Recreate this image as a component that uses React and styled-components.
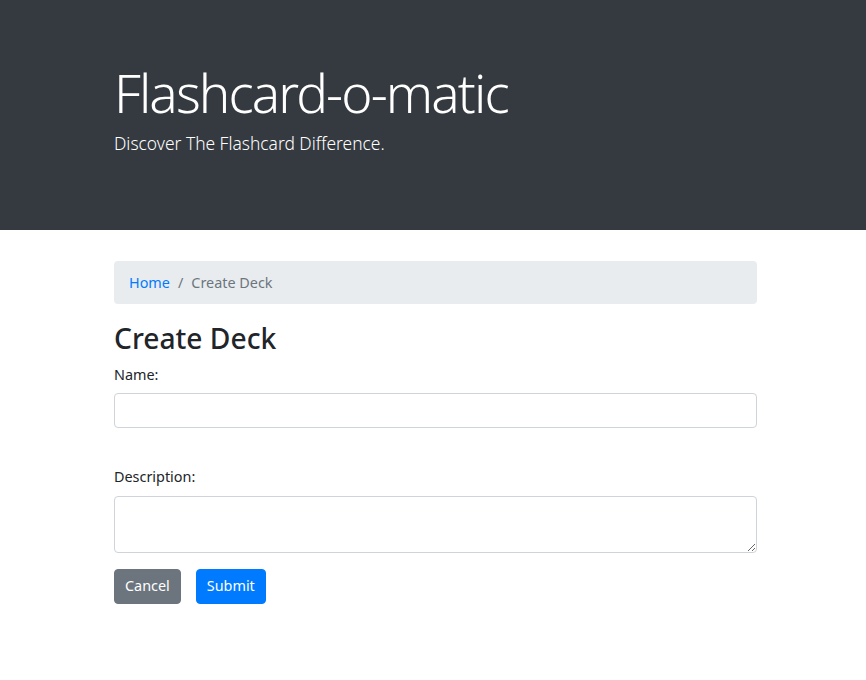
import React from 'react'
import styled, { createGlobalStyle } from 'styled-components'

const GlobalStyle = createGlobalStyle`
  body {
    margin: 0;
    background: #fff;
    font-family: 'Noto Sans', 'Open Sans', sans-serif;
    font-size: 14.4px;
    line-height: 1.5;
    color: #212529;
  }
  * {
    box-sizing: border-box;
  }
`

const Header = styled.header`
  background: #343a40;
  color: #fff;
  height: 230px;
  padding-top: 61px;
`
const Container = styled.div`
  width: 643px;
  margin-left: 114px;
`
const Title = styled.h1`
  margin: 0 0 5px;
  font-size: 53px;
  font-weight: 300;
  line-height: 1.2;
  letter-spacing: -1.9px;
`
const Lead = styled.p`
  margin: 0;
  font-size: 17.4px;
  font-weight: 300;
  line-height: 1.5;
`
const Main = styled.main`
  padding-top: 31px;
`
const Breadcrumb = styled.nav`
  display: flex;
  align-items: center;
  height: 43px;
  padding: 0 15px;
  background: #e9ecef;
  border-radius: 4px;
  margin-bottom: 18px;
  color: #6c757d;
`
const Crumb = styled.a`
  color: #007bff;
  text-decoration: none;
`
const Divider = styled.span`
  padding: 0 8px;
  color: #6c757d;
`
const Heading = styled.h2`
  margin: 0 0 8px;
  font-size: 28.2px;
  font-weight: 500;
  line-height: 1.2;
`
const Group = styled.div`
  margin-bottom: ${(props) => props.gap || 14}px;
`
const Label = styled.label`
  display: block;
  margin-bottom: 8px;
`
const Input = styled.input`
  display: block;
  width: 100%;
  height: 34.5px;
  padding: 5px 11px;
  font: inherit;
  border: 1px solid #ced4da;
  border-radius: 4px;
`
const TextArea = styled.textarea`
  display: block;
  width: 100%;
  height: 57px;
  padding: 5px 11px;
  font: inherit;
  border: 1px solid #ced4da;
  border-radius: 4px;
`
const Actions = styled.div`
  display: flex;
  gap: 15px;
`
const Button = styled.button`
  height: 35px;
  padding: 0 10px;
  font: inherit;
  color: #fff;
  background: ${(props) => (props.primary ? '#007bff' : '#6c757d')};
  border: 1px solid ${(props) => (props.primary ? '#007bff' : '#6c757d')};
  border-radius: 4px;
`

export default function App() {
  return (
    <>
      <GlobalStyle />
      <Header>
        <Container>
          <Title>Flashcard-o-matic</Title>
          <Lead>Discover The Flashcard Difference.</Lead>
        </Container>
      </Header>
      <Main>
        <Container>
          <Breadcrumb>
            <Crumb href="#">Home</Crumb>
            <Divider>/</Divider>
            <span>Create Deck</span>
          </Breadcrumb>
          <Heading>Create Deck</Heading>
          <form>
            <Group gap={38}>
              <Label htmlFor="name">Name:</Label>
              <Input id="name" type="text" />
            </Group>
            <Group gap={16}>
              <Label htmlFor="description">Description:</Label>
              <TextArea id="description" rows={2} />
            </Group>
            <Actions>
              <Button type="button">Cancel</Button>
              <Button type="submit" primary>Submit</Button>
            </Actions>
          </form>
        </Container>
      </Main>
    </>
  )
}
